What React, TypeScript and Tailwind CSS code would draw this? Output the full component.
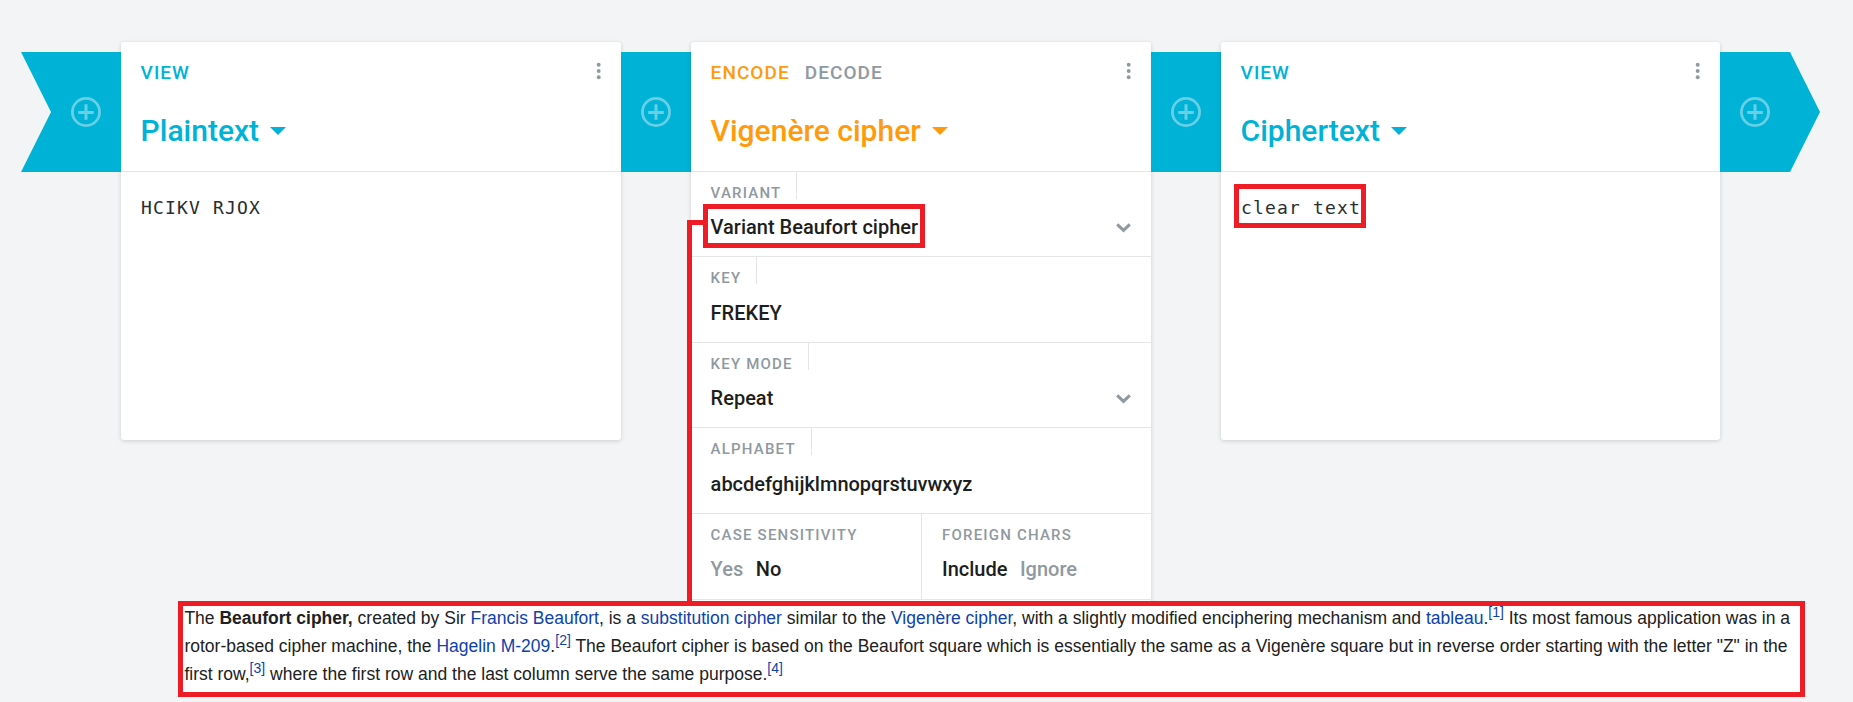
import React from 'react';

function AddButton() {
  return (
    <button className="flex h-[30px] w-[30px] shrink-0 items-center justify-center">
      <svg width="30" height="30" viewBox="0 0 30 30" fill="none" stroke="#66d0e6">
        <circle cx="15" cy="15" r="13.6" strokeWidth="2.8" />
        <path d="M15 7.2v15.6M7.2 15.4h15.6" strokeWidth="3" />
      </svg>
    </button>
  );
}

function Pipe() {
  return (
    <div className="mt-[10px] flex h-[120px] w-[70px] shrink-0 items-center justify-center bg-[#00b2d5]">
      <AddButton />
    </div>
  );
}

function Dots() {
  return (
    <svg className="mt-[20px] shrink-0" width="6" height="18" viewBox="0 0 6 18" fill="#8f999f">
      <circle cx="2.7" cy="2.7" r="1.95" />
      <circle cx="2.7" cy="9" r="1.95" />
      <circle cx="2.7" cy="15.3" r="1.95" />
    </svg>
  );
}

function Chevron() {
  return (
    <svg className="mt-[2px]" width="15" height="10" viewBox="0 0 15 10" fill="none" stroke="#8f999f" strokeWidth="3">
      <path d="M1.2 1.3L7.5 7.4L13.8 1.3" />
    </svg>
  );
}

type HeaderProps = { tabs: string[]; title: string; tone: string };

function Header({ tabs, title, tone }: HeaderProps) {
  return (
    <div className="flex h-[130px] justify-between border-b border-[#e3e6e8] pl-[19.6px] pr-[19px]">
      <div className="flex flex-col">
        <div className="mt-[19px] flex h-6 gap-[15px] text-[19px] leading-6 font-medium tracking-[1.05px]">
          {tabs.map((t, i) => (
            <span key={t} className={i === 0 ? tone : 'text-[#8f999f]'}>{t}</span>
          ))}
        </div>
        <div className={`mt-[26px] flex h-10 items-center text-[30px] leading-10 font-medium whitespace-nowrap ${tone}`}>
          {title}
          <svg className="ml-[11px]" width="16" height="8" viewBox="0 0 16 8" fill="currentColor">
            <path d="M0 0h16L8 8z" />
          </svg>
        </div>
      </div>
      <Dots />
    </div>
  );
}

function Viewer({ title, text, width }: { title: string; text: string; width: string }) {
  return (
    <section className={`h-[398px] shrink-0 rounded-[3px] bg-white shadow-[0_1px_4px_rgba(0,0,0,0.16)] ${width}`}>
      <Header tabs={['VIEW']} title={title} tone="text-[#00b2d5]" />
      <p className="pl-5 pt-[24px] font-['DejaVu_Sans_Mono',monospace] text-[18px] leading-6 tracking-[1.16px] text-[#2a2d30]">{text}</p>
    </section>
  );
}

type FieldProps = { label: string; value: string; height: string; gap: string; select?: boolean };

function Field({ label, value, height, gap, select }: FieldProps) {
  return (
    <div className={`border-b border-[#e3e6e8] pl-[19.6px] pr-5 ${height}`}>
      <div className="flex">
        <span className="h-[27px] border-r border-[#e3e6e8] pt-[11px] pr-[15px] text-[15px] leading-5 font-medium tracking-[1.2px] text-[#8f999f]">{label}</span>
      </div>
      <div className={`flex h-6 items-center justify-between text-[20px] leading-6 font-medium text-[#1c1e20] ${gap}`}>
        <span>{value}</span>
        {select && <Chevron />}
      </div>
    </div>
  );
}

function Toggle({ label, options, active, className }: { label: string; options: string[]; active: number; className: string }) {
  return (
    <div className={className}>
      <div className="h-[27px] pt-[11px] text-[15px] leading-5 font-medium tracking-[1.2px] text-[#8f999f]">{label}</div>
      <div className="mt-4 flex gap-[12.5px] text-[20px] leading-6 font-medium">
        {options.map((o, i) => (
          <span key={o} className={i === active ? 'text-[#1c1e20]' : 'text-[#8f999f]'}>{o}</span>
        ))}
      </div>
    </div>
  );
}

function Link({ children }: { children: React.ReactNode }) {
  return <a className="text-[#0d42ad]">{children}</a>;
}

function Ref({ n }: { n: number }) {
  return <sup className="relative top-[-7px] align-baseline text-[14px] leading-none text-[#0d42ad]">[{n}]</sup>;
}

export default function App() {
  return (
    <main className="relative h-[702px] w-[1853px] overflow-hidden bg-[#f2f4f6] font-[Roboto,sans-serif]">
      <div className="flex items-start pt-[42px] pl-[21px]">
        <div className="mt-[10px] flex h-[120px] w-[100px] shrink-0 items-center bg-[#00b2d5] pl-[50px] [clip-path:polygon(0_0,100%_0,100%_100%,0_100%,30px_50%)]">
          <AddButton />
        </div>
        <Viewer title="Plaintext" text="HCIKV RJOX" width="w-[500px]" />
        <Pipe />
        <section className="h-[590px] w-[460px] shrink-0 rounded-[3px] bg-white shadow-[0_1px_4px_rgba(0,0,0,0.16)]">
          <Header tabs={['ENCODE', 'DECODE']} title="Vigenère cipher" tone="text-[#ff9a0d]" />
          <Field label="VARIANT" value="Variant Beaufort cipher" height="h-[85px]" gap="mt-4" select />
          <Field label="KEY" value="FREKEY" height="h-[86px]" gap="mt-[17px]" />
          <Field label="KEY MODE" value="Repeat" height="h-[85px]" gap="mt-4" select />
          <Field label="ALPHABET" value="abcdefghijklmnopqrstuvwxyz" height="h-[86px]" gap="mt-[17px]" />
          <div className="flex h-[86px] border-b border-[#e3e6e8]">
            <Toggle label="CASE SENSITIVITY" options={['Yes', 'No']} active={1} className="w-[231px] border-r border-[#e3e6e8] pl-[19.6px]" />
            <Toggle label="FOREIGN CHARS" options={['Include', 'Ignore']} active={0} className="flex-1 pl-5" />
          </div>
        </section>
        <Pipe />
        <Viewer title="Ciphertext" text="clear text" width="w-[499px]" />
        <div className="mt-[10px] flex h-[120px] w-[100px] shrink-0 items-center bg-[#00b2d5] pl-5 [clip-path:polygon(0_0,70px_0,100%_50%,70px_100%,0_100%)]">
          <AddButton />
        </div>
      </div>

      <div className="absolute top-[204px] left-[703px] h-[44px] w-[222px] border-[5px] border-[#ee1c25]" />
      <div className="absolute top-[220px] left-[687px] h-[382px] w-[16px] rounded-tl-[1px] border-t-[5px] border-l-[5px] border-[#ee1c25]" />
      <div className="absolute top-[184px] left-[1234px] h-[44px] w-[132px] border-[5px] border-[#ee1c25]" />

      <article className="absolute top-[601px] left-[178px] h-[96px] w-[1627px] border-[5px] border-[#ee1c25] bg-white pl-[1.4px] font-['Liberation_Sans',sans-serif] text-[17.5px] leading-7 tracking-[0.004px] whitespace-nowrap text-[#202122]">
        <div className="-mt-[2px]">
          The <b>Beaufort cipher,</b> created by Sir <Link>Francis Beaufort</Link>, is a <Link>substitution cipher</Link> similar to the <Link>Vigenère cipher</Link>, with a slightly modified enciphering mechanism and <Link>tableau</Link>.<Ref n={1} /> Its most famous application was in a
        </div>
        <div>
          rotor-based cipher machine, the <Link>Hagelin M-209</Link>.<Ref n={2} /> The Beaufort cipher is based on the Beaufort square which is essentially the same as a Vigenère square but in reverse order starting with the letter "Z" in the
        </div>
        <div>
          first row,<Ref n={3} /> where the first row and the last column serve the same purpose.<Ref n={4} />
        </div>
      </article>
    </main>
  );
}
